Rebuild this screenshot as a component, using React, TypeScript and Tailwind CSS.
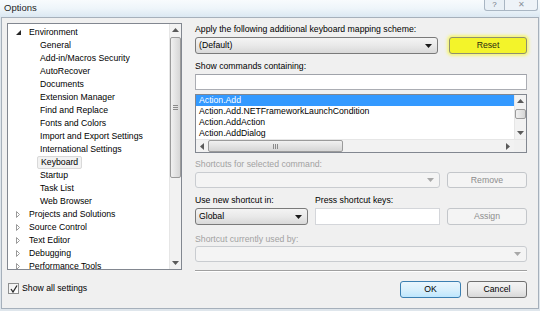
import clsx from "clsx";

const treeChildren = [
  "General",
  "Add-in/Macros Security",
  "AutoRecover",
  "Documents",
  "Extension Manager",
  "Find and Replace",
  "Fonts and Colors",
  "Import and Export Settings",
  "International Settings",
  "Keyboard",
  "Startup",
  "Task List",
  "Web Browser",
];

const treeCollapsed = [
  "Projects and Solutions",
  "Source Control",
  "Text Editor",
  "Debugging",
  "Performance Tools",
];

const commands = [
  "Action.Add",
  "Action.Add.NETFrameworkLaunchCondition",
  "Action.AddAction",
  "Action.AddDialog",
];

function Arrow({ dir, color = "#3a3a3a" }: { dir: "up" | "down" | "left" | "right"; color?: string }) {
  const pts = {
    up: "0,4 3.5,0 7,4",
    down: "0,0 7,0 3.5,4",
    left: "4,0 4,7 0,3.5",
    right: "0,0 0,7 4,3.5",
  }[dir];
  const vertical = dir === "up" || dir === "down";
  return (
    <svg width={vertical ? 7 : 4} height={vertical ? 4 : 7} viewBox={vertical ? "0 0 7 4" : "0 0 4 7"}>
      <polygon points={pts} fill={color} />
    </svg>
  );
}

function VScroll({ thumbTop, thumbHeight }: { thumbTop: number; thumbHeight: number }) {
  return (
    <div className="flex w-[12px] shrink-0 flex-col border-l border-[#e6e6e6] bg-[#f2f2f2]">
      <div className="flex h-[12px] items-center justify-center">
        <Arrow dir="up" color="#5a5a5a" />
      </div>
      <div className="relative flex-1">
        <div
          className="absolute left-[0px] right-[0px] flex items-center justify-center rounded-[2px] border border-[#9b9b9b] bg-gradient-to-r from-[#f1f1f1] to-[#d6d6d6]"
          style={{ top: thumbTop, height: thumbHeight }}
        >
          {thumbHeight > 20 && (
            <div className="flex flex-col gap-[1px]">
              <div className="h-px w-[5px] bg-[#8a8a8a]" />
              <div className="h-px w-[5px] bg-[#8a8a8a]" />
              <div className="h-px w-[5px] bg-[#8a8a8a]" />
            </div>
          )}
        </div>
      </div>
      <div className="flex h-[12px] items-center justify-center">
        <Arrow dir="down" color="#5a5a5a" />
      </div>
    </div>
  );
}

function TreeRow({ label, level, expander, selected }: { label: string; level: 0 | 1; expander?: "open" | "closed"; selected?: boolean }) {
  return (
    <div className="flex h-[13px] shrink-0 items-center whitespace-nowrap">
      {level === 0 ? (
        <div className="ml-[8px] flex w-[10px] items-center">
          {expander === "open" ? (
            <svg width="5" height="5" viewBox="0 0 5 5">
              <polygon points="5,0 5,5 0,5" fill="#262626" />
            </svg>
          ) : (
            <svg width="4" height="7" viewBox="0 0 4 7">
              <polygon points="0.5,0.5 0.5,6.5 3.5,3.5" fill="none" stroke="#9a9a9a" strokeWidth="1" />
            </svg>
          )}
        </div>
      ) : (
        <div className="w-[29px] shrink-0" />
      )}
      <span
        className={clsx(
          "px-[3px] leading-[11px]",
          selected && "rounded-[2px] border border-[#d9d9d9] bg-[#f2f2f2] px-[2px]"
        )}
      >
        {label}
      </span>
    </div>
  );
}

function Combo({ label, disabled, className }: { label?: string; disabled?: boolean; className?: string }) {
  return (
    <div
      className={clsx(
        "flex items-center justify-between rounded-[3px] border pl-[3px] pr-[5px]",
        disabled
          ? "border-[#c9ccd0] bg-[#f4f4f4]"
          : "border-[#7a7a7a] bg-gradient-to-b from-[#f4f4f4] via-[#e9e9e9] to-[#d9d9d9]",
        className
      )}
    >
      <span>{label}</span>
      <Arrow dir="down" color={disabled ? "#a8a8a8" : "#1a1a1a"} />
    </div>
  );
}

function Btn({
  children,
  variant = "normal",
  className,
}: {
  children: string;
  variant?: "normal" | "default" | "disabled" | "yellow";
  className?: string;
}) {
  return (
    <div
      className={clsx(
        "flex items-center justify-center rounded-[3px] border",
        variant === "normal" && "border-[#707070] bg-gradient-to-b from-[#f4f4f4] via-[#ebebeb] to-[#d8d8d8] text-black",
        variant === "default" && "border-[#3c7fb1] bg-gradient-to-b from-[#eaf6fd] via-[#d9f0fc] to-[#bee6fd] text-black",
        variant === "disabled" && "border-[#c3c6ca] bg-[#f4f4f4] text-[#8d8d8d]",
        variant === "yellow" && "border-[#8f8f70] bg-[#f3f42a] text-[#2a2a10] shadow-[0_0_3px_2px_#f5f57a]",
        className
      )}
    >
      {children}
    </div>
  );
}

export default function App() {
  return (
    <div className="flex h-[311px] w-[540px] flex-col overflow-hidden bg-[#dfe6ec] font-['Liberation_Sans',Arial,sans-serif] text-[8.7px] leading-[11px] text-black">
      {/* title bar */}
      <div className="flex h-[17px] shrink-0 items-start justify-between bg-gradient-to-b from-[#f8fbfd] via-[#eef5fa] to-[#dbe8f2]">
        <span className="ml-[4px] mt-[2px] text-[9.5px] leading-[11px] text-[#1e1e1e]">Options</span>
        <div className="mr-[2px] flex h-[11px]">
          <div className="flex w-[21px] items-center justify-center rounded-bl-[3px] border border-t-0 border-[#a9b6c3] bg-[#e9f0f6] text-[8px] leading-none text-[#6b7480]">
            ?
          </div>
          <div className="flex w-[33px] items-center justify-center rounded-br-[3px] border border-l-0 border-t-0 border-[#a9b6c3] bg-[#eef3f8] text-[8px] leading-none text-[#8a929b]">
            ✕
          </div>
        </div>
      </div>

      {/* body */}
      <div className="mx-[1px] flex h-[292px] shrink-0 border border-[#a6b0bb] bg-[#f0f0f0] pl-[5px] pt-[5px]">
        {/* left column */}
        <div className="flex w-[175px] shrink-0 flex-col">
          <div className="flex h-[247px] border border-[#828790] bg-white">
            <div className="flex flex-1 flex-col overflow-hidden pt-[2px]">
              <TreeRow label="Environment" level={0} expander="open" />
              {treeChildren.map((c) => (
                <TreeRow key={c} label={c} level={1} selected={c === "Keyboard"} />
              ))}
              {treeCollapsed.map((c) => (
                <TreeRow key={c} label={c} level={0} expander="closed" />
              ))}
            </div>
            <VScroll thumbTop={1} thumbHeight={141} />
          </div>
          <div className="ml-[1px] mt-[13px] flex items-center">
            <div className="flex h-[11px] w-[11px] items-center justify-center border border-[#8e8f8f] bg-gradient-to-br from-[#f0f0f0] to-[#ffffff]">
              <svg width="8" height="8" viewBox="0 0 8 8">
                <polyline points="1,4 3,7 7,0.5" fill="none" stroke="#2a2a2a" strokeWidth="1.3" />
              </svg>
            </div>
            <span className="ml-[3px]">Show all settings</span>
          </div>
        </div>

        {/* right column */}
        <div className="ml-[13px] flex w-[332px] shrink-0 flex-col">
          <div className="mt-[1px] h-[11px]">Apply the following additional keyboard mapping scheme:</div>
          <div className="mt-[2px] flex h-[17px] gap-[11px]">
            <Combo label="(Default)" className="flex-1" />
            <Btn variant="yellow" className="w-[78px]">
              Reset
            </Btn>
          </div>

          <div className="mt-[7px] h-[11px]">Show commands containing:</div>
          <div className="mt-[2px] h-[16px] border border-[#abadb3] border-t-[#a0a3aa] bg-white" />

          <div className="mt-[4px] flex h-[59px] flex-col border border-[#828790] bg-white">
            <div className="flex h-[44px]">
              <div className="flex flex-1 flex-col">
                {commands.map((c, i) => (
                  <div
                    key={c}
                    className={clsx(
                      "h-[11px] whitespace-nowrap pl-[3px] leading-[11px]",
                      i === 0 && "bg-[#3399ff] text-white"
                    )}
                  >
                    {c}
                  </div>
                ))}
              </div>
              <VScroll thumbTop={2} thumbHeight={10} />
            </div>
            <div className="flex h-[13px] border-t border-[#e6e6e6] bg-[#f2f2f2]">
              <div className="flex w-[12px] items-center justify-center">
                <Arrow dir="left" color="#5a5a5a" />
              </div>
              <div className="flex flex-1">
                <div className="flex w-[135px] items-center justify-center rounded-[2px] border border-[#9b9b9b] bg-gradient-to-b from-[#f1f1f1] to-[#d6d6d6]">
                  <div className="flex gap-[1px]">
                    <div className="h-[5px] w-px bg-[#8a8a8a]" />
                    <div className="h-[5px] w-px bg-[#8a8a8a]" />
                    <div className="h-[5px] w-px bg-[#8a8a8a]" />
                  </div>
                </div>
              </div>
              <div className="flex w-[12px] items-center justify-center">
                <Arrow dir="right" color="#5a5a5a" />
              </div>
              <div className="w-[12px] bg-[#f0f0f0]" />
            </div>
          </div>

          <div className="mt-[6px] h-[11px] text-[#a2a2a2]">Shortcuts for selected command:</div>
          <div className="mt-[2px] flex h-[16px] gap-[7px]">
            <Combo disabled className="flex-1" />
            <Btn variant="disabled" className="w-[80px]">
              Remove
            </Btn>
          </div>

          <div className="mt-[7px] flex h-[11px]">
            <span className="w-[120px]">Use new shortcut in:</span>
            <span>Press shortcut keys:</span>
          </div>
          <div className="mt-[2px] flex h-[17px] gap-[7px]">
            <Combo label="Global" className="w-[113px]" />
            <div className="w-[125px] border border-[#d4d6da] bg-white" />
            <Btn variant="disabled" className="flex-1">
              Assign
            </Btn>
          </div>

          <div className="mt-[9px] h-[11px] text-[#a2a2a2]">Shortcut currently used by:</div>
          <Combo disabled className="mt-[1px] h-[16px]" />

          <div className="mt-[8px] h-px bg-[#a0a0a0] shadow-[0_1px_0_#ffffff]" />

          <div className="mt-[10px] flex h-[17px] justify-end gap-[6px]">
            <Btn variant="default" className="w-[61px]">
              OK
            </Btn>
            <Btn className="w-[60px]">Cancel</Btn>
          </div>
        </div>
      </div>
    </div>
  );
}
